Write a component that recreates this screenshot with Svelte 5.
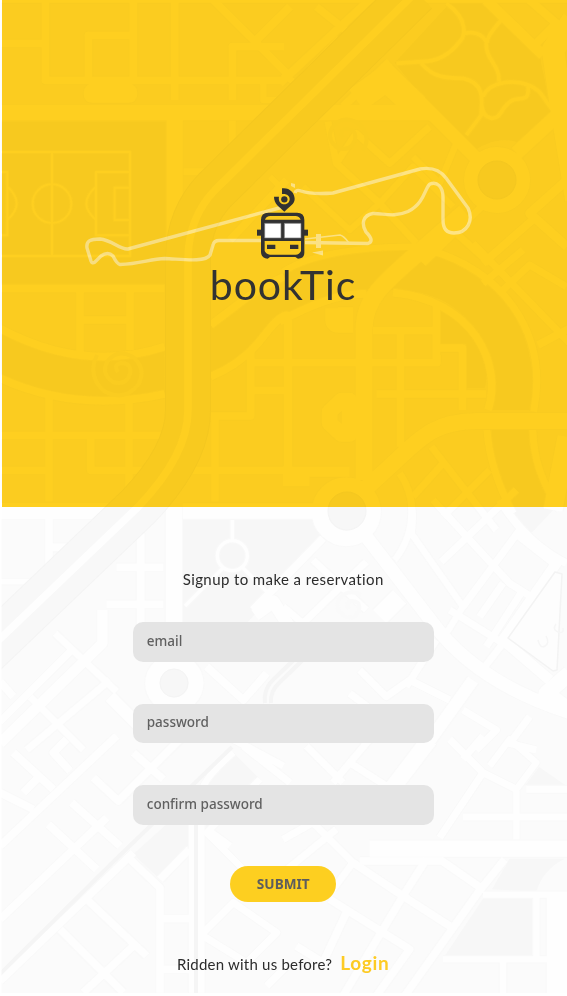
<script>
  let email = $state('');
  let password = $state('');
  let confirm = $state('');

  // Street map, drawn in sections: x/y is the section origin, each road is [width, path] at 3 units per pixel.
  const sections = [
    {
      x: 0, y: 0,
      parks: ['M0 364H499V852H0Z'],
      roads: [
        [20, 'M0 0H852'],
        [26, 'M136 0V241H852'], [26, 'M0 130H136'], [26, 'M400 0V241'], [26, 'M524 0V300'],
        [26, 'M400 106H265V241'], [50, 'M275 275H388V285H275Z'], [26, 'M852 140H697V300'],
        [26, 'M640 0L870 230'], [28, 'M870 20L765 125'], [22, 'M790 250V300H852'],
        [50, 'M0 338H1290'], [52, 'M524 350V790'], [24, 'M697 362V460'], [24, 'M550 515H630'],
        [26, 'M690 720L860 540'], [20, 'M810 530L860 580'],
        [9, 'M0 456H390V768H0M156 456V768M390 516H288V706H390M390 563H344V660H390M288 560Q230 610 288 660M0 516H22V706H0M22 560Q78 610 22 660'],
        [9, 'M98 611a58 58 0 1 0 116 0a58 58 0 1 0 -116 0']
      ]
    },
    {
      x: 283, y: 0,
      parks: ['M335 188L500 10H605L770 165L805 335L710 430Q640 400 555 465Z'],
      roads: [
        [20, 'M0 0H852'],
        [28, 'M-10 250L280 -20'], [26, 'M100 20L200 100'], [26, 'M30 260L170 115'], [22, 'M0 220L30 245'],
        [42, 'M300 195L580 475'], [28, 'M180 320L320 185'], [80, 'M220 300L310 235L400 320'],
        [34, 'M610 0L780 165'], [28, 'M740 0L820 70L760 130'], [70, 'M870 60L810 150L830 290L880 600'],
        [46, 'M700 460L830 340'],
        [14, 'M490 10C560 60 545 110 530 125C500 165 460 185 415 185L340 190M545 100Q590 90 610 125C605 180 650 190 648 245M655 60Q610 110 612 130M415 190C450 230 480 235 540 235C620 250 590 330 595 345L550 405M600 290C620 240 700 240 735 255C780 270 780 300 810 330M735 260C740 310 710 290 690 300C650 320 660 355 625 355Q600 350 597 320'],
        [24, 'M135 365L160 490L290 610L400 730'], [24, 'M160 490L220 400L320 490L440 380'],
        [22, 'M290 610L390 500L510 620M390 470L470 550L520 430'], [22, 'M60 560L200 690L290 610'],
        [24, 'M420 790L720 500'], [26, 'M600 790L760 650'], [24, 'M520 700L620 790'], [30, 'M852 540L740 640L852 740']
      ]
    },
    {
      x: 0, y: 250,
      parks: ['M0 230Q240 370 494 290V430Q250 470 0 380Z', 'M632 225L850 90V215Q730 330 632 380Z'],
      roads: [
        [26, 'M0 116H494'], [26, 'M240 116V310'], [26, 'M390 116V300'], [26, 'M240 210H390'],
        [26, 'M0 235Q250 370 494 290'], [26, 'M0 385Q230 490 494 432'],
        [26, 'M147 440V755'], [26, 'M387 450V720'], [26, 'M0 556H490'], [26, 'M0 661H147'], [26, 'M272 560V661H450'],
        [52, 'M0 783H370'], [26, 'M632 225L770 120L852 80'], [26, 'M632 380Q730 340 790 260T870 200'],
        [26, 'M752 300V498H632'], [26, 'M752 338H860'], [26, 'M752 421H860'], [26, 'M645 500V755'], [26, 'M570 661H852'], [50, 'M548 783H1110']
      ]
    },
    {
      x: 283, y: 250,
      parks: [
        'M0 60Q220 -20 440 0C640 60 770 230 750 480H610C660 340 580 120 330 120Q130 120 0 210Z',
        'M472 175C590 220 630 340 605 415H550V282H472Z',
        'M625 540H740C740 650 780 720 820 780H690Q620 650 625 540Z'
      ],
      roads: [
        [24, 'M440 0C650 60 800 240 752 485'], [26, 'M-10 215Q150 128 250 132M330 128C570 150 660 340 615 480'],
        [22, 'M0 65Q120 -10 400 -10'], [28, 'M15 210V670'], [26, 'M0 338H462V315'],
        [80, 'M165 175V210H210'], [26, 'M352 240V590'], [26, 'M270 242H460V165'], [26, 'M460 242V338'], [26, 'M470 294H538V480'], [26, 'M280 432H610'],
        [50, 'M175 452L140 485V520L175 552H200V452Z'], [34, 'M0 665H200'], [40, 'M0 690H80'],
        [24, 'M612 540Q620 660 690 790'], [24, 'M750 540Q750 660 830 780'], [60, 'M852 560L810 780'],
        [24, 'M445 590L640 840'], [24, 'M350 670Q400 740 385 850'], [24, 'M390 740L480 640M480 800L620 660'],
        [24, 'M570 -20L860 280M600 100L720 0M660 120L740 45L850 110'], [26, 'M765 285L860 235']
      ]
    },
    {
      x: 0, y: 500,
      parks: ['M548 60H940Q975 80 960 130L740 370H548Z'],
      roads: [
        [26, 'M147 55V215'], [26, 'M147 142H240'], [20, 'M0 245H150'], [26, 'M422 100V430M350 202H490M320 313H490'], [52, 'M522 20V400'],
        [13, 'M697 60V120M668 205L555 318M728 203L800 275M652 167a45 45 0 1 0 90 0a45 45 0 1 0 -90 0'],
        [40, 'M765 345L820 305L880 400'], [34, 'M307 330V430L0 730'], [24, 'M165 400L350 575'],
        [24, 'M0 665L215 450'], [24, 'M80 750L330 540'],
        [24, 'M90 590L250 750'],
        [40, 'M330 590L440 700'], [48, 'M458 550a65 65 0 1 0 130 0a65 65 0 1 0 -130 0'], [26, 'M620 500L730 600L800 520'], [26, 'M0 545L40 590']
      ]
    },
    {
      x: 283, y: 500,
      parks: ['M670 20H820L735 110Z'],
      roads: [
        [50, 'M110 35a80 80 0 1 0 160 0a80 80 0 1 0 -160 0'], [26, 'M120 115L-90 330'],
        [42, 'M250 110L450 370Q590 560 900 650'], [24, 'M90 180L250 330M250 185L60 370L0 320'],
        [22, 'M385 20Q390 110 335 180M385 100L540 320L490 400'], [24, 'M450 0L680 250L760 300'],
        [24, 'M475 185L700 -30M540 320L710 90M590 350L660 250M610 440L720 270'],
        [26, 'M650 0Q730 130 850 190'], [34, 'M705 100L820 190L660 420L800 540'], [24, 'M500 330L660 430L590 520'],
        [60, 'M350 290L290 350'], [24, 'M370 560L460 420M230 510L310 590L380 540L500 600M200 580L280 640'],
        [40, 'M570 540L420 750'], [24, 'M540 630L640 690L580 750M740 650L680 730L760 750'], [50, 'M860 520L790 580L870 640']
      ]
    },
    {
      x: 0, y: 746,
      parks: ['M400 325L500 235H568V295L472 392Z', 'M600 120L690 10L780 100L620 245Z'],
      roads: [
        [26, 'M0 140L100 190M70 140L110 100M40 20L160 130M210 75L160 20L200 -20'],
        [26, 'M280 95L355 165L550 -30M400 20L490 100'], [26, 'M0 300L350 -30'], [26, 'M0 520L320 215M145 235L290 370M215 170L360 300'],
        [26, 'M0 705L400 320'], [26, 'M380 330L480 425V740'], [26, 'M260 460L440 630M180 550L370 740M250 740L400 600'],
        [26, 'M480 400L568 310M480 518H570M480 670H570'], [50, 'M590 235V740'],
        [22, 'M610 120Q630 80 700 20M780 100L620 260L760 400'], [24, 'M730 0L870 110M700 -20L850 60M620 250L690 300'],
        [24, 'M610 560L700 470L830 560L740 650L610 570M800 720L860 660']
      ]
    },
    {
      x: 283, y: 746,
      parks: ['M600 458H748V627H487Z', 'M727 118L768 63L847 118Z', 'M680 338H845Q780 370 760 437L627 430Z'],
      roads: [
        [52, 'M440 -20L310 150'], [24, 'M70 0L180 110M200 50L310 120M150 110L260 -20'],
        [24, 'M500 -20L600 80L700 130M540 40L600 -30M600 80L470 275'], [22, 'M620 60L680 -20L760 50L700 130V280'],
        [24, 'M540 213H860M730 130H860'], [52, 'M260 308H860'], [26, 'M230 345H480'],
        [26, 'M210 350L360 450L500 540M470 340L600 430M665 340L585 440L365 750'],
        [26, 'M430 340L360 450L180 750M140 460L380 610L280 750M40 600L120 650L190 500'],
        [22, 'M600 446H860M760 440V640M480 640H860M660 640V750'], [80, 'M830 450V750'],
        [24, 'M0 280L90 230L210 350L150 430M0 380L160 250']
      ]
    }
  ];

  // Rings and boulevards that cross several sections, in pixels.
  const avenues = [
    [17, 'M364 480V330C364 300 380 285 425 247L465 212'],
    [16, 'M567 421H478C430 421 420 440 375 480L362 492'],
    [17, 'M472.500 180a24.500 24.500 0 1 0 49 0a24.500 24.500 0 1 0 -49 0']
  ];

  const rail = 'M416 -8L215 190Q188 218 188 260V410Q188 455 138 507L-20 658';
</script>

<main>
  <svg class="map" viewBox="0 0 567 996" aria-hidden="true">
    <rect width="567" height="996" fill="#fbfbfb" />
    {#each sections as s}
      <g transform="translate({s.x} {s.y}) scale(.33333)">
        {#each s.parks as d}<path class="park" {d} />{/each}
      </g>
    {/each}
    <g class="road edge">
      {#each sections as s}
        <g transform="translate({s.x} {s.y}) scale(.33333)">
          {#each s.roads as [w, d]}<path {d} stroke-width={w + 3} />{/each}
        </g>
      {/each}
      {#each avenues as [w, d]}<path {d} stroke-width={w + 2} />{/each}
    </g>
    <g class="road">
      {#each sections as s}
        <g transform="translate({s.x} {s.y}) scale(.33333)">
          {#each s.roads as [w, d]}<path {d} stroke-width={w - 3} />{/each}
        </g>
      {/each}
      {#each avenues as [w, d]}<path {d} stroke-width={w} />{/each}
    </g>
    <g class="island">
      <circle cx="497" cy="180" r="19" />
      <circle cx="347" cy="511" r="19" />
      <circle cx="174" cy="683" r="14" />
    </g>
    <g class="swirl">
      <path d="M118 372q-5-7 3-9q11 0 9 11q-4 12-17 8q-12-8-6-20q10-14 26-5q14 12 5 28q-14 17-34 6q-17-15-7-36" />
      <path d="M343 138q-5-7 3-9q11 0 9 11q-4 12-17 8q-12-8-6-20q10-14 26-5q14 12 5 28" />
      <path d="M349 609q-4-6 2-8q10 0 8 9q-4 11-15 6q-10-8-5-17q9-11 22-4" />
    </g>
    <path class="rail shade" d={rail} />
    <path class="rail" d={rail} />
    <path class="median" d={rail} />
    <g class="tram">
      <path d="M265 703Q263 688 276 677L302 652M271 703Q270 691 280 682L311 652" />
      <path d="M-2 976L112 863L232 747M196 824V993" />
    </g>
    <path class="lot" d="M555 572L562 574L557 670L553 671L508 638Z" />
    <path class="mark" d="M538 640q2 9 7 6t1-10M556 624q-4 6 2 8t5-4" />
    <path class="margin" d="M0 0H1.500V993H567V996H0Z" />
  </svg>

  <section class="hero">
    <svg class="track" viewBox="0 0 567 300" aria-hidden="true">
      <path d="M283 207L128 249C120 250 112 240 100 239C90 239 86 241 87 248L91 261Q92 264 95 262L101 256Q108 251 113 256Q117 264 120 264.500C140 264 150 259 165 258.500C180 259 205 263 210 255L213 245Q214 240.500 219 240.500L261 240.500M305 242.500L368 243.500Q375 241 366 232C361 224 363 215 373 213.500C383 213 393 218 408 211.500C425 203 425 187 430 184C437 181 443 187 443 197V220Q443 233 454 233C467 233 474 221 468 208L446 178C440 170 431 167 420 169L333 193C320 194 310 194 301 191Q296 189 295 193" />
      <path class="thin" d="M305 239L340 235Q344 236 349 243" />
      <path class="spot" d="M291 183l4 1 0 4-4-2zM316 234h5v14h-5zM312 252.500l11-2v5z" />
    </svg>
    <div class="brand">
      <svg class="bus" viewBox="171 24 153 213" aria-label="bookTic bus">
        <path d="M246 25C268 22 284 38 284 57C284 72 268 80 253 95C238 80 222 72 222 50H237C234 64 243 73 253 73C264 73 269 65 269 57C269 47 260 40 246 42Z" />
        <circle cx="253" cy="58" r="9.500" />
        <rect x="171" y="149" width="153" height="18" />
        <path d="M205 98H291Q313 98 313 120V218Q313 236 294 236L286 231H210L203 236Q183 234 183 216V120Q183 98 205 98Z" />
        <path class="panel" d="M211 108H286Q298 108 302 119H195Q199 108 211 108ZM194 183H303V213Q298 224 287 224H210Q198 222 194 213Z" />
        <path class="glass" d="M194 130H243V174H194ZM253 130H303V174H253Z" />
        <path d="M201 194H226V207H201ZM270 194H295V207H270Z" />
      </svg>
      <h1>bookTic</h1>
    </div>
  </section>

  <form onsubmit={(e) => e.preventDefault()}>
    <h2>Signup to make a reservation</h2>
    <input type="text" placeholder="email" bind:value={email} />
    <input type="password" placeholder="password" bind:value={password} />
    <input type="password" placeholder="confirm password" bind:value={confirm} />
    <button>SUBMIT</button>
    <p>Ridden with us before? <a href="#login">Login</a></p>
  </form>
</main>

<style>
  :global(body) { margin: 0; background: #fff; }
  main { position: relative; width: 567px; height: 996px; overflow: hidden; isolation: isolate; background: #fff; }
  .map { position: absolute; inset: 0; z-index: 1; width: 567px; height: 996px; mix-blend-mode: multiply; pointer-events: none; }
  .park { fill: #f7f7f7; }
  .road path { fill: none; stroke: #fefefe; stroke-linejoin: round; }
  .road.edge path { stroke: #f9f9f9; }
  .island { fill: #f7f7f7; stroke: #f4f4f4; }
  .rail { fill: none; stroke: #f8f8f8; stroke-width: 44; }
  .rail.shade { stroke: #f4f4f4; stroke-width: 46; }
  .median { fill: none; stroke: #fefefe; stroke-width: 7.500; }
  .swirl { fill: none; stroke: #fafafa; stroke-width: 4; }
  .tram { fill: none; stroke: #f5f5f5; stroke-width: 4; }
  .lot { fill: #fdfdfd; stroke: #f3f3f3; stroke-width: 1.500; stroke-linejoin: round; }
  .mark { fill: none; stroke: #f6f6f6; stroke-width: 1.500; }
  .margin { fill: #fff; }

  .hero { position: relative; box-sizing: border-box; height: 507px; margin-left: 1.500px; padding-top: 188px; background: #ffd020; }
  .track { position: absolute; top: 0; left: -1.500px; width: 567px; height: 300px; fill: none; stroke: #fff; stroke-width: 3.400; opacity: .45; }
  .track .thin { stroke-width: 1.500; }
  .track .spot { fill: #fff; stroke: none; }
  .brand { position: relative; z-index: 2; display: flex; flex-direction: column; align-items: center; padding-right: 2.500px; }
  .bus { width: 51px; height: 71px; margin-right: 1.500px; fill: #323232; }
  .panel { fill: #fbcc20; }
  .glass { fill: #fff; stroke: #777; stroke-width: 2; }
  h1 { margin: 1.500px 0 0; font: 400 41px/48px Lato, sans-serif; letter-spacing: .9px; color: #323232; white-space: nowrap; }

  form { position: relative; z-index: 2; display: flex; flex-direction: column; align-items: center; padding: 62px .500px 0 0; }
  h2 { margin: 0 0 32px; font: 400 15px/21px Lato, sans-serif; letter-spacing: .4px; color: #2c2c2c; white-space: nowrap; }
  input { box-sizing: border-box; width: 301px; height: 39.500px; margin: 0 0 42px; padding: 0 14px 2px; border: 0; border-radius: 10px; background: #e4e4e4; font: 500 13.500px "Noto Sans", sans-serif; color: #606060; outline: 0; }
  input::placeholder { color: #606060; opacity: 1; }
  button { width: 106px; height: 36px; margin-top: -.500px; padding: 0 0 1px; border: 0; border-radius: 18px; background: #fdcf20; font: 700 13.600px "Noto Sans", sans-serif; color: #5d5d5d; }
  p { margin: 48px 0 0; font: 400 15px/26px Lato, sans-serif; letter-spacing: .22px; color: #2c2c2c; white-space: nowrap; }
  a { margin-left: 4px; font-size: 19px; font-weight: 700; letter-spacing: .7px; color: #fdcb24; text-decoration: none; }
</style>
